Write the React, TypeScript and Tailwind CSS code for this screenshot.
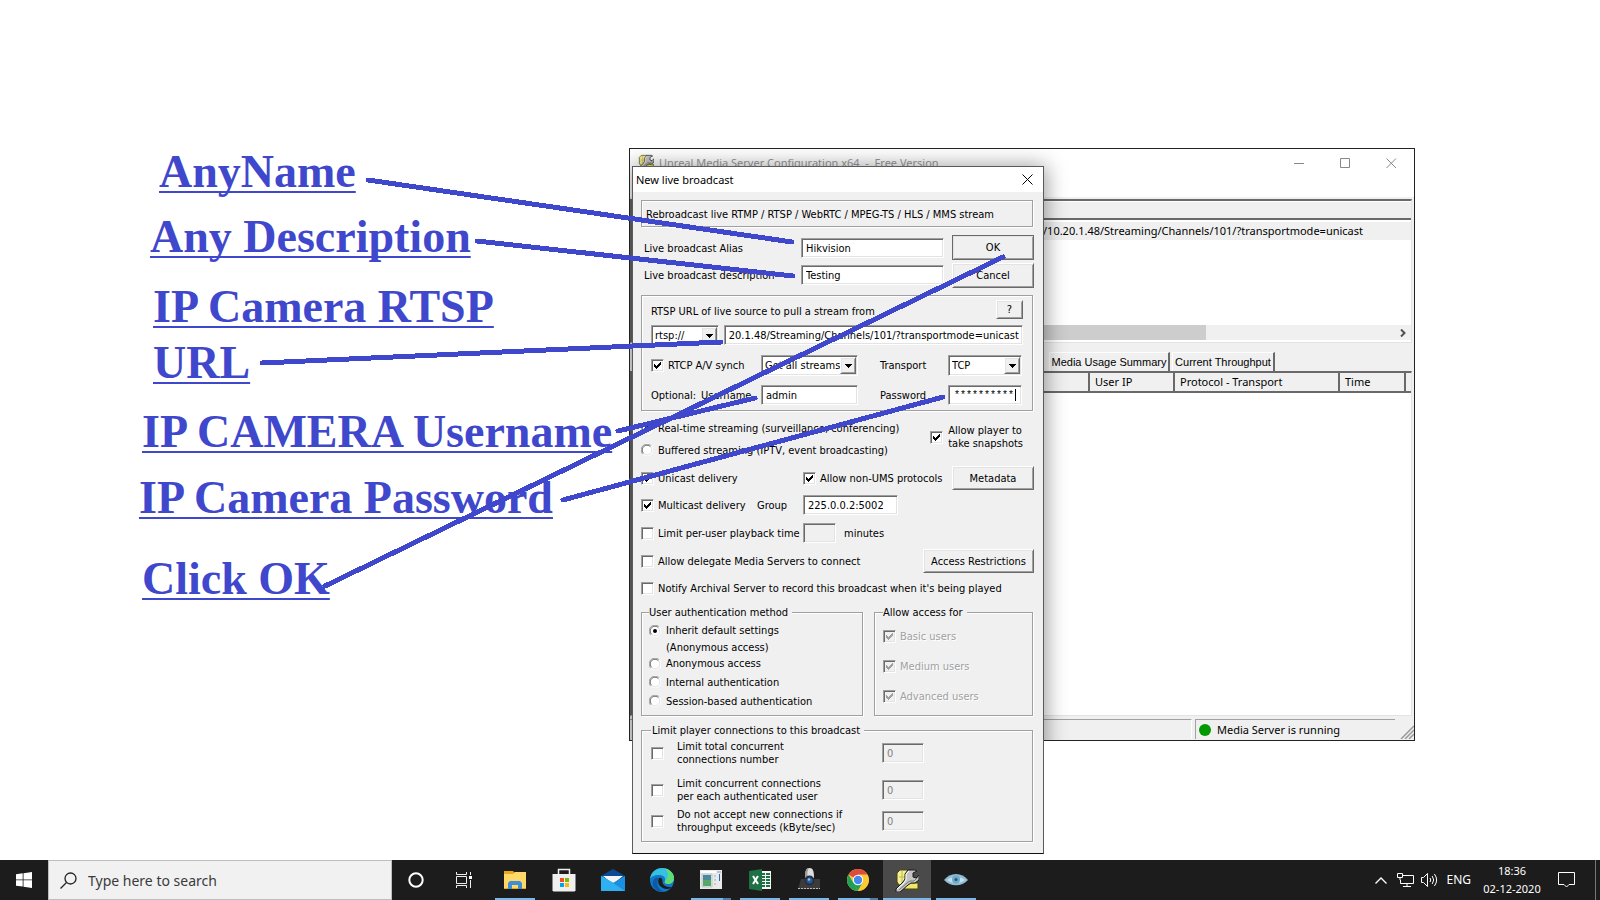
import React, { useEffect, useRef } from 'react';
import clsx from 'clsx';

// Classic Windows bevels
const SUNKEN = 'border border-t-[#a0a0a0] border-l-[#a0a0a0] border-b-white border-r-white shadow-[inset_1px_1px_0_#696969,inset_-1px_-1px_0_#e3e3e3]';
const RAISED = 'border border-t-white border-l-white border-b-[#696969] border-r-[#696969] shadow-[inset_1px_1px_0_#e3e3e3,inset_-1px_-1px_0_#a0a0a0]';
const ETCHED = 'border border-[#a0a0a0] shadow-[1px_1px_0_#fff,inset_1px_1px_0_#fff]';

function Button({ children, className, isDefault }: { children: React.ReactNode; className?: string; isDefault?: boolean }) {
    return (
        <button type="button" className={clsx('bg-[#f0f0f0] text-center', RAISED, isDefault && 'outline outline-[#696969] -outline-offset-1', className)}>
            {children}
        </button>
    );
}

function TextField({ className, ...props }: React.ComponentProps<'input'>) {
    return (
        <input
            type="text"
            className={clsx('h-5 outline-none disabled:bg-[#f0f0f0] disabled:text-[#808080] bg-white', SUNKEN, className)}
            {...props}
        />
    );
}

function Select({ id, label, value, className }: { id: string; label: string; value: string; className?: string }) {
    return (
        <span className={clsx('relative inline-block h-[21px]', className)}>
            <select id={id} aria-label={label} className={clsx('block h-full w-full appearance-none bg-white pl-[3px] outline-none', SUNKEN)}>
                <option>{value}</option>
            </select>
            <span className={clsx('pointer-events-none absolute inset-y-[2px] right-[2px] flex w-4 items-center justify-center bg-[#f0f0f0]', RAISED)}>
                <svg width="7" height="4" viewBox="0 0 7 4" shapeRendering="crispEdges"><path d="M0 0h7v1H6v1H5v1H4v1H3V3H2V2H1V1H0z" /></svg>
            </span>
        </span>
    );
}

interface CheckProps {
    label: React.ReactNode;
    checked?: boolean;
    disabled?: boolean;
    className?: string;
}

function Checkbox({ label, checked, disabled, className }: CheckProps) {
    return (
        <label className={clsx('flex items-center gap-1', disabled && 'text-[#a0a0a0] [text-shadow:1px_1px_0_#fff]', className)}>
            <span className="relative block h-[13px] w-[13px] shrink-0">
                <input type="checkbox" defaultChecked={checked} disabled={disabled} className={clsx('block h-full w-full appearance-none bg-white disabled:bg-[#f0f0f0]', SUNKEN)} />
                {checked && (
                    <svg className="pointer-events-none absolute inset-0" width="13" height="13" viewBox="0 0 13 13" shapeRendering="crispEdges">
                        <path d="M3 5h1v1h1v1h1V6h1V5h1V4h1V3h1v3H9v1H8v1H7v1H6v1H5V9H4V8H3z" fill={disabled ? '#a0a0a0' : '#000'} />
                    </svg>
                )}
            </span>
            <span>{label}</span>
        </label>
    );
}

function Radio({ label, name, checked, className }: CheckProps & { name: string }) {
    return (
        <label className={clsx('flex items-center gap-[5px]', className)}>
            <span className="relative block h-3 w-3 shrink-0">
                <input type="radio" name={name} defaultChecked={checked} className="block h-full w-full appearance-none rounded-full" />
                <svg className="pointer-events-none absolute inset-0" width="12" height="12" viewBox="0 0 12 12">
                    <circle cx="6" cy="6" r="5" fill="#fff" />
                    <path d="M1.8 10.2A5.9 5.9 0 0 1 10.2 1.8" fill="none" stroke="#a0a0a0" />
                    <path d="M2.6 9.4A4.8 4.8 0 0 1 9.4 2.6" fill="none" stroke="#696969" />
                    <path d="M10.2 1.8A5.9 5.9 0 0 1 1.8 10.2" fill="none" stroke="#fff" />
                    <path d="M9.4 2.6A4.8 4.8 0 0 1 2.6 9.4" fill="none" stroke="#e3e3e3" />
                    {checked && <circle cx="6" cy="6" r="2" />}
                </svg>
            </span>
            <span>{label}</span>
        </label>
    );
}

function WrenchIcon({ size }: { size: number }) {
    return (
        <svg width={size} height={size} viewBox="0 0 24 24">
            <path d="M2 5l3-3h8l2 3v12H4l-2-3z" fill="#f2ee9a" stroke="#4a4600" />
            <path d="M4 9h8M7 3v12" stroke="#c4ba3a" fill="none" />
            <path d="M11 15h12v6H9z" fill="#efe66a" stroke="#4a4600" />
            <path d="M13 2h7l2 1-4 2v4l3 1 3-3v5l-4 3h-4l-3 2-8 7H1v-3l7-7 2-3V6z" fill="#c4c4c4" stroke="#1a1a1a" />
            <path d="M14 3l-3 3v6l-2 3-7 6" stroke="#fff" fill="none" />
            <path d="M23 9l-4 4h-4l-3 2-8 7" stroke="#777" fill="none" />
        </svg>
    );
}

function LimitRow({ lines, id, className }: { lines: [string, string]; id: string; className?: string }) {
    return (
        <div className={clsx('flex items-center', className)}>
            <Checkbox className="w-[231px] gap-[13px]" label={<>{lines[0]}<br />{lines[1]}</>} />
            <TextField id={id} aria-label={lines.join(' ')} defaultValue="0" disabled className="w-[42px] px-1" />
        </div>
    );
}

function BroadcastDialog() {
    const urlRef = useRef<HTMLInputElement>(null);

    // keep the end of the long url in view
    useEffect(() => {
        if (urlRef.current) urlRef.current.scrollLeft = urlRef.current.scrollWidth;
    }, []);

    return (
        <form
            className="absolute left-[632px] top-[166px] w-[412px] border border-[#5a5a5a] border-b-[#111] bg-[#f0f0f0] font-['DejaVu_Sans_Condensed','DejaVu_Sans',sans-serif] text-[11px] leading-[13px] text-black"
            onSubmit={(e) => e.preventDefault()}
        >
            <header className="flex h-[25px] items-center justify-between bg-white pb-px pl-[3px] pr-[10px]">
                <h2 className="font-['Noto_Sans',sans-serif] text-[11px]">New live broadcast</h2>
                <button type="button" aria-label="Close">
                    <svg width="11" height="11" viewBox="0 0 11 11"><path d="M.5.5l10 10M10.5.5l-10 10" stroke="#000" /></svg>
                </button>
            </header>

            <div className="pb-[11px] pl-2 pr-[9px] pt-2">
                <p className={clsx('mr-px h-[27px] px-1 pt-[7px]', ETCHED)}>Rebroadcast live RTMP / RTSP / WebRTC / MPEG-TS / HLS / MMS stream</p>

                <div className="mt-2 flex items-center">
                    <div className="grid grow grid-cols-[160px_1fr] items-center gap-y-[7px] pl-[3px]">
                        <label htmlFor="alias" className="-mr-4">Live broadcast Alias</label>
                        <TextField id="alias" defaultValue="Hikvision" className="-ml-[3px] w-[143px] px-1" />
                        <label htmlFor="description" className="-mr-4">Live broadcast description</label>
                        <TextField id="description" defaultValue="Testing" className="-ml-[3px] w-[143px] px-1" />
                    </div>
                    <div className="flex w-[82px] flex-col gap-[3px]">
                        <Button isDefault className="h-[25px]">OK</Button>
                        <Button className="h-[25px]">Cancel</Button>
                    </div>
                </div>

                <section className={clsx('mr-px mt-[7px] h-[116px] px-[9px] pt-1', ETCHED)}>
                    <div className="flex items-center justify-between">
                        <label htmlFor="url" className="pt-1">RTSP URL of live source to pull a stream from</label>
                        <Button className="h-[19px] w-[27px]">?</Button>
                    </div>
                    <div className="mt-[6px] flex justify-between">
                        <Select id="scheme" label="Protocol" value="rtsp://" className="w-[68px]" />
                        <TextField ref={urlRef} id="url" defaultValue="10.20.1.48/Streaming/Channels/101/?transportmode=unicast" className="w-[299px] pl-[3px] pr-[3px]" />
                    </div>
                    <div className="mt-[9px] flex items-center">
                        <Checkbox checked label="RTCP A/V synch" className="w-[110px]" />
                        <Select id="streams" label="Streams" value="Get all streams" className="w-[97px]" />
                        <label htmlFor="transport" className="w-[90px] pl-[22px]">Transport</label>
                        <Select id="transport" label="Transport" value="TCP" className="w-[74px]" />
                    </div>
                    <div className="mt-[9px] flex items-center">
                        <span className="w-[50px]">Optional:</span>
                        <label htmlFor="username" className="w-[60px]">Username</label>
                        <TextField id="username" defaultValue="admin" className="w-[97px] px-1" />
                        <label htmlFor="password" className="w-[90px] pl-[22px]">Password</label>
                        <span className="relative">
                            <TextField id="password" defaultValue="**********" className="w-[74px] pl-[5px] font-['Liberation_Mono',monospace] text-[10px]" />
                            <i className="absolute right-[6px] top-1 h-3 w-px bg-black" />
                        </span>
                    </div>
                </section>

                <section className="flex items-center justify-between pr-[11px] pt-[6px]">
                    <div>
                        <Radio name="mode" checked label="Real-time streaming (surveillance, conferencing)" className="h-[22px]" />
                        <Radio name="mode" label="Buffered streaming (IPTV, event broadcasting)" className="h-[22px]" />
                    </div>
                    <Checkbox checked className="mb-1 gap-[5px]" label={<>Allow player to<br />take snapshots</>} />
                </section>

                <section>
                    <div className="mt-1 flex h-[26px] items-center">
                        <Checkbox checked label="Unicast delivery" className="w-[162px]" />
                        <Checkbox checked label="Allow non-UMS protocols" className="grow" />
                        <Button className="h-6 w-[82px]">Metadata</Button>
                    </div>
                    <div className="flex h-7 items-center">
                        <Checkbox checked label="Multicast delivery" className="w-[116px]" />
                        <label htmlFor="group" className="w-[46px]">Group</label>
                        <TextField id="group" defaultValue="225.0.0.2:5002" className="w-[95px] px-1" />
                    </div>
                    <div className="flex h-7 items-center">
                        <Checkbox label="Limit per-user playback time" className="w-[162px]" />
                        <TextField aria-label="Playback time in minutes" disabled className="w-[33px]" />
                        <span className="pl-2">minutes</span>
                    </div>
                    <div className="flex h-7 items-center justify-between">
                        <Checkbox label="Allow delegate Media Servers to connect" />
                        <Button className="h-6 w-[111px]">Access Restrictions</Button>
                    </div>
                    <div className="flex h-[26px] items-center">
                        <Checkbox label="Notify Archival Server to record this broadcast when it's being played" />
                    </div>
                </section>

                <div className="mr-px mt-[5px] flex gap-[11px]">
                    <fieldset className={clsx('h-[110px] w-[222px] px-[7px]', ETCHED)}>
                        <legend className="bg-[#f0f0f0] pr-1">User authentication method</legend>
                        <Radio name="auth" checked label="Inherit default settings" className="mt-[5px]" />
                        <p className="mb-px mt-1 pl-[17px]">(Anonymous access)</p>
                        <Radio name="auth" label="Anonymous access" className="h-[17px]" />
                        <Radio name="auth" label="Internal authentication" className="h-5" />
                        <Radio name="auth" label="Session-based authentication" className="h-[18px]" />
                    </fieldset>
                    <fieldset className={clsx('h-[110px] grow px-2', ETCHED)}>
                        <legend className="bg-[#f0f0f0] pr-1">Allow access for</legend>
                        <div className="flex flex-col gap-[17px] pt-[11px]">
                            <Checkbox checked disabled label="Basic users" />
                            <Checkbox checked disabled label="Medium users" />
                            <Checkbox checked disabled label="Advanced users" />
                        </div>
                    </fieldset>
                </div>

                <fieldset className={clsx('mr-px mt-2 h-[118px] px-[9px]', ETCHED)}>
                    <legend className="bg-[#f0f0f0] pl-px pr-1">Limit player connections to this broadcast</legend>
                    <LimitRow id="total" lines={['Limit total concurrent', 'connections number']} className="mt-[3px]" />
                    <LimitRow id="per-user" lines={['Limit concurrent connections', 'per each authenticated user']} className="mt-[11px]" />
                    <LimitRow id="throughput" lines={['Do not accept new connections if', 'throughput exceeds (kByte/sec)']} className="mt-[5px]" />
                </fieldset>
            </div>
        </form>
    );
}

function ServerWindow() {
    return (
        <section className="absolute left-[629px] top-[148px] flex h-[593px] w-[786px] flex-col overflow-hidden border border-[#222] bg-[#f0f0f0] font-['Noto_Sans',sans-serif] text-[11px] leading-4 text-black">
            <header className="flex h-[48px] items-start bg-white pl-2 pr-[17px] pt-[5px] text-[#999]">
                <WrenchIcon size={16} />
                <h1 className="grow pl-[5px] pt-px">Unreal Media Server Configuration x64&nbsp; -&nbsp; Free Version</h1>
                <div className="flex gap-[35px] pt-1">
                    <button type="button" aria-label="Minimize"><svg width="11" height="11"><path d="M0 5.5h10" stroke="#888" /></svg></button>
                    <button type="button" aria-label="Maximize"><svg width="11" height="11"><path d="M.5.5h9v9h-9z" fill="none" stroke="#888" /></svg></button>
                    <button type="button" aria-label="Close"><svg width="11" height="11"><path d="M.5.5l9.500 9.500M10 .5L.5 10" stroke="#888" /></svg></button>
                </div>
            </header>

            <div className="mr-[2px] mt-[2px] h-[144px] border-l-2 border-t-2 border-[#696969] border-b border-r border-b-[#e3e3e3] border-r-[#e3e3e3] bg-white">
                <div className="h-[19px] border-b-2 border-[#696969] border-t border-t-white bg-[#f0f0f0]" />
                <p className="mt-[2px] h-[18px] bg-[#f0f0f0] pl-[411px] text-[11px] leading-[18px]">/10.20.1.48/Streaming/Channels/101/?transportmode=unicast</p>
                <div className="mt-[85px] flex h-[15px] items-center justify-between bg-[#f0f0f0] pr-1">
                    <div className="h-full w-[574px] bg-[#cdcdcd]" />
                    <svg width="8" height="8" viewBox="0 0 8 8"><path d="M2 .5L5.500 4 2 7.500" fill="none" stroke="#505050" strokeWidth="2" /></svg>
                </div>
            </div>

            <nav className="mt-[9px] flex h-[19px] gap-[2px] pl-[419px]">
                <button type="button" className="w-[121px] border-l border-t border-r-2 border-l-white border-t-white border-r-[#696969] font-['Liberation_Sans',sans-serif]">Media Usage Summary</button>
                <button type="button" className="w-[103px] border-l border-t border-r-2 border-l-white border-t-white border-r-[#696969] font-['Liberation_Sans',sans-serif]">Current Throughput</button>
            </nav>

            <div className="mr-[2px] grow border-l-2 border-t-2 border-[#696969] border-b border-r border-b-[#e3e3e3] border-r-[#e3e3e3] bg-white">
                <table className="w-full table-fixed border-collapse bg-[#f0f0f0] text-left">
                    <thead>
                        <tr className="h-[19px] border-b-2 border-[#696969] [&>th]:border-r-2 [&>th]:border-[#696969] [&>th]:pl-[5px] [&>th]:font-normal [&>th:last-child]:border-r-0">
                            <th className="w-[457px]" />
                            <th className="w-[85px]">User IP</th>
                            <th className="w-[165px]">Protocol - Transport</th>
                            <th className="w-[66px]">Time</th>
                            <th />
                        </tr>
                    </thead>
                </table>
            </div>

            <footer className="flex h-[24px] items-end gap-[3px] pb-px pt-1">
                <div className="h-5 w-[562px] border-r border-t border-r-white border-t-[#a0a0a0]" />
                <div className="flex h-5 w-[200px] items-center gap-[6px] border-l border-t border-[#a0a0a0] pl-[3px]">
                    <i className="h-3 w-3 rounded-full bg-[#009a00]" />
                    Media Server is running
                </div>
                <svg className="ml-auto" width="14" height="14" viewBox="0 0 14 14"><path d="M1 14L14 1M5 14l9-9M9 14l5-5" stroke="#999" strokeWidth="1.500" /></svg>
            </footer>

            {/* shadow the dialog casts on its owner */}
            <div className="pointer-events-none absolute left-[2px] top-[17px] h-[688px] w-[412px] shadow-[0_2px_20px_2px_rgba(0,0,0,0.4)]" />
        </section>
    );
}

const NOTE = "absolute whitespace-nowrap font-['Liberation_Serif',serif] text-[46px] font-bold leading-[56px] text-[#3f48cc] underline decoration-2 underline-offset-4 [text-decoration-skip-ink:none]";

const pointers = [
    [368, 180, 792, 242],
    [477, 241, 793, 276],
    [262, 363, 721, 342],
    [618, 431, 755, 398],
    [563, 500, 943, 397],
    [325, 586, 1003, 257],
];

function Annotations() {
    return (
        <>
            <p className={clsx(NOTE, 'left-[159px] top-[144px]')}>AnyName</p>
            <p className={clsx(NOTE, 'left-[150px] top-[209px]')}>Any Description</p>
            <p className={clsx(NOTE, 'left-[153px] top-[279px]')}>IP Camera RTSP<br />URL</p>
            <p className={clsx(NOTE, 'left-[142px] top-[404px]')}>IP CAMERA Username</p>
            <p className={clsx(NOTE, 'left-[139px] top-[470px]')}>IP Camera Password</p>
            <p className={clsx(NOTE, 'left-[142px] top-[551px]')}>Click OK</p>
            <svg className="pointer-events-none absolute left-0 top-0" width="1100" height="640" shapeRendering="crispEdges">
                {pointers.map(([x1, y1, x2, y2]) => (
                    <line key={y1} x1={x1} y1={y1} x2={x2} y2={y2} stroke="#3f48cc" strokeWidth="5" strokeLinecap="round" />
                ))}
            </svg>
        </>
    );
}

const apps = [
    {
        name: 'File Explorer', bar: 'full',
        icon: (
            <>
                <path d="M1 3h9l2 2h11v16H1z" fill="#e8a917" />
                <path d="M1 6h9l2-2h11v16H1z" fill="#ffd869" />
                <path d="M5 21v-6l2-2h10l2 2v6h-4v-4H9v4z" fill="#3f8fd6" />
            </>
        ),
    },
    {
        name: 'Microsoft Store', bar: 'none',
        icon: (
            <>
                <path d="M6.500 7V1.500h11V7" fill="none" stroke="#eee" strokeWidth="1.500" />
                <path d="M0.500 6h23v16.500l-1 1h-21l-1-1z" fill="#efefef" />
                <path d="M8 10h4v4H8z" fill="#f25022" /><path d="M13 10h4v4h-4z" fill="#7fba00" />
                <path d="M8 15h4v4H8z" fill="#00a4ef" /><path d="M13 15h4v4h-4z" fill="#ffb900" />
            </>
        ),
    },
    {
        name: 'Mail', bar: 'none',
        icon: (
            <>
                <path d="M0 8l12-7 12 7v4H0z" fill="#0a4a94" />
                <path d="M2 8h20l-10 8z" fill="#f2f4f6" />
                <path d="M0 8l13 7L0 23z" fill="#35b8f1" />
                <path d="M24 8v15H0l12-8z" fill="#1a8fe0" />
                <path d="M0 8v15h24L12 15z" fill="#2fb0f0" />
            </>
        ),
    },
    {
        name: 'Edge', bar: 'none',
        icon: (
            <>
                <circle cx="12" cy="12" r="12" fill="#1478c8" />
                <path d="M0 11C1 4 6 0 12 0c7 0 12 5 12 10 0 4-3 6-6 6-2 0-4-1-3-3 1-4-2-6-6-6-5 0-8 2-9 4z" fill="#35c1e0" />
                <path d="M15 .5c5 1 9 5 9 9.500 0 4-3 6-6 6-2 0-4-1-3-3 4-4 4-8 0-12.500z" fill="#5fdc78" />
                <path d="M9 10c-3 5 2 11 8 11 2 0 4-1 5.500-2-5 1-11-2-10-6 0-3-2-4-3.500-3z" fill="#1c1c1c" />
                <path d="M9 10c-4 5-1 12 5 13.800-5 .5-9-2-11-6C2 12 5 9 9 10z" fill="#0c59a4" />
            </>
        ),
    },
    {
        name: 'Server Monitor', bar: 'split',
        icon: (
            <>
                <path d="M1 2h22v19H1z" fill="#e9e9e9" />
                <path d="M2 3h15v2H2z" fill="#fff" /><path d="M18 3h4v2h-4z" fill="#bcc4cc" />
                <path d="M3 6h10v13H3z" fill="#dfe6ea" stroke="#9aa5ab" strokeWidth=".5" />
                <path d="M4 7h8v5H4z" fill="#4a8a9c" /><path d="M4 12h8v6H4z" fill="#58a768" />
                <path d="M15 7h2v2h-2zM15 11h2v2h-2zM15 15h2v2h-2z" fill="#c9c9c9" />
                <path d="M20 6h1v7h-1z" fill="#246fc0" />
            </>
        ),
    },
    {
        name: 'Excel', bar: 'full',
        icon: (
            <>
                <path d="M11 3h12v18H11z" fill="#f5f8f6" />
                <path d="M14 5h3v2h-3zM18 5h4v2h-4zM14 8h3v2h-3zM18 8h4v2h-4zM14 11h3v2h-3zM18 11h4v2h-4zM14 14h3v2h-3zM18 14h4v2h-4zM14 17h3v2h-3zM18 17h4v2h-4z" fill="#1f7145" />
                <path d="M1 3l13-2v22L1 21z" fill="#1f7145" />
                <path d="M5 8l5 8M10 8l-5 8" stroke="#fff" strokeWidth="2" />
            </>
        ),
    },
    {
        name: 'Camera Viewer', bar: 'full',
        icon: (
            <>
                <path d="M4 11h19v10H1z" fill="#3b3b3b" />
                <path d="M1 20.500h22" stroke="#bbb" strokeDasharray="2 1" />
                <path d="M8 10c0-7 1-10 4.500-10S17 3 17 10z" fill="#dedede" />
                <path d="M8 10c0-7 1-10 4-10-2 3-2 6-1 10z" fill="#9a9a9a" />
                <circle cx="12.500" cy="12.500" r="5" fill="#2a2f38" />
                <circle cx="12.500" cy="12.500" r="3" fill="#2458a0" /><circle cx="12" cy="11.500" r="1.200" fill="#8cbcf0" />
            </>
        ),
    },
    {
        name: 'Chrome', bar: 'split',
        icon: (
            <>
                <circle cx="12" cy="12" r="11" fill="#fcc934" />
                <path d="M12 12L2.500 6.500A11 11 0 0 1 21.500 6.500H12z" fill="#dd4b3e" />
                <path d="M2.500 6.500L7.500 15 12 23A11 11 0 0 1 2.500 6.500z" fill="#1fa055" />
                <path d="M7 14.500L12 23l4.500-8.500z" fill="#1fa055" />
                <path d="M12 23l5-8.500V7h4.500A11 11 0 0 1 12 23z" fill="#fcc934" />
                <circle cx="12" cy="12" r="5.200" fill="#fff" /><circle cx="12" cy="12" r="4.200" fill="#4688f1" />
            </>
        ),
    },
    { name: 'Media Server Configuration', bar: 'active', icon: null },
    {
        name: 'Eye Viewer', bar: 'full',
        icon: (
            <>
                <path d="M0 12C6 4 18 4 24 12c-6 7-18 7-24 0z" fill="#8fbdd6" />
                <path d="M3 12c5-4 13-4 18 0-5 4-13 4-18 0z" fill="#c4e0ee" />
                <circle cx="12" cy="11.500" r="4" fill="#6fa9cb" /><circle cx="12" cy="11.500" r="1.500" fill="#2b5570" />
            </>
        ),
    },
];

function Taskbar() {
    return (
        <footer className="flex h-10 items-stretch bg-[#1c1c1c] font-['Noto_Sans',sans-serif] text-white">
            <button type="button" aria-label="Start" className="flex w-12 items-center justify-center">
                <svg width="16" height="16" viewBox="0 0 16 16" fill="#fff"><path d="M0 2.200L6.700 1.300v6.200H0zM7.500 1.200L16 0v7.500H7.500zM0 8.300h6.700v6.300L0 13.700zM7.500 8.300H16V16l-8.500-1.200z" /></svg>
            </button>
            <div className="flex w-[344px] items-center gap-[11px] border border-[#bdbdbd] bg-[#f1f1f1] pl-[11px]">
                <svg width="17" height="17" viewBox="0 0 17 17" fill="none" stroke="#222" strokeWidth="1.300"><circle cx="10.500" cy="6.500" r="5.500" /><path d="M6.500 10.500L.5 16.500" /></svg>
                <input type="search" aria-label="Search" placeholder="Type here to search" className="grow bg-transparent text-[14px] outline-none placeholder:text-[#3a3a3a]" />
            </div>
            <button type="button" aria-label="Cortana" className="flex w-12 items-center justify-center">
                <svg width="16" height="16" viewBox="0 0 16 16"><circle cx="8" cy="8" r="6.700" fill="none" stroke="#fff" strokeWidth="2" /></svg>
            </button>
            <button type="button" aria-label="Task View" className="flex w-12 items-center justify-center">
                <svg width="17" height="16" viewBox="0 0 17 16" fill="none" stroke="#eee"><path d="M.5 0v2.500h10V0M.5 4.500h10v7H.5zM.5 16v-2.500h10V16M14.500 0v3M14.500 8v8" /><path d="M13 4h3v3h-3z" fill="#fff" stroke="none" /></svg>
            </button>
            <div className="flex gap-px pl-[3px]">
                {apps.map((app) => (
                    <button key={app.name} type="button" aria-label={app.name} className={clsx('flex w-12 flex-col items-center', app.bar === 'active' && 'bg-[#4a4a4a]')}>
                        <span className="flex grow items-center pt-[2px]">
                            {app.icon ? <svg width="24" height="24" viewBox="0 0 24 24">{app.icon}</svg> : <WrenchIcon size={24} />}
                        </span>
                        <i className={clsx('flex h-[2px]', app.bar === 'active' ? 'w-12' : 'w-10', app.bar !== 'none' && 'bg-[#76b9ed]')}>
                            {app.bar === 'split' && <i className="ml-auto h-full w-2 bg-[#4f7fa6]" />}
                        </i>
                    </button>
                ))}
            </div>
            <div className="ml-auto flex items-center text-[12px]">
                <svg width="12" height="7" viewBox="0 0 12 7"><path d="M.5 6.500L6 1l5.500 5.500" fill="none" stroke="#fff" strokeWidth="1.300" /></svg>
                <svg className="ml-[10px]" width="17" height="14" viewBox="0 0 17 14" fill="none" stroke="#fff"><path d="M6 2.500h10.500v8H3.500V7M10 10.500v3M6 13.500h8M.5.5h5v4h-5zM3 4.500V7" /></svg>
                <svg className="ml-[7px]" width="17" height="14" viewBox="0 0 17 14" fill="none" stroke="#fff"><path d="M.5 4.500h2l4-4v13l-4-4h-2zM9 5q1.500 2 0 4M11.200 3q3 4 0 8M13.400 1q4.500 6 0 12" /></svg>
                <span className="ml-2">ENG</span>
                <time className="ml-[11px] w-[60px] text-center text-[11px] leading-[18px]">18:36<br />02-12-2020</time>
                <svg className="ml-4" width="17" height="16" viewBox="0 0 17 16" fill="none" stroke="#fff"><path d="M.5.5h16v12H11L8.500 15 6 12.500H.5z" /></svg>
                <i className="ml-5 mr-1 h-10 w-px bg-[#777]" />
            </div>
        </footer>
    );
}

export default function App() {
    return (
        <div className="flex min-h-screen flex-col bg-white">
            <main className="relative grow">
                <ServerWindow />
                <BroadcastDialog />
                <Annotations />
            </main>
            <Taskbar />
        </div>
    );
}
